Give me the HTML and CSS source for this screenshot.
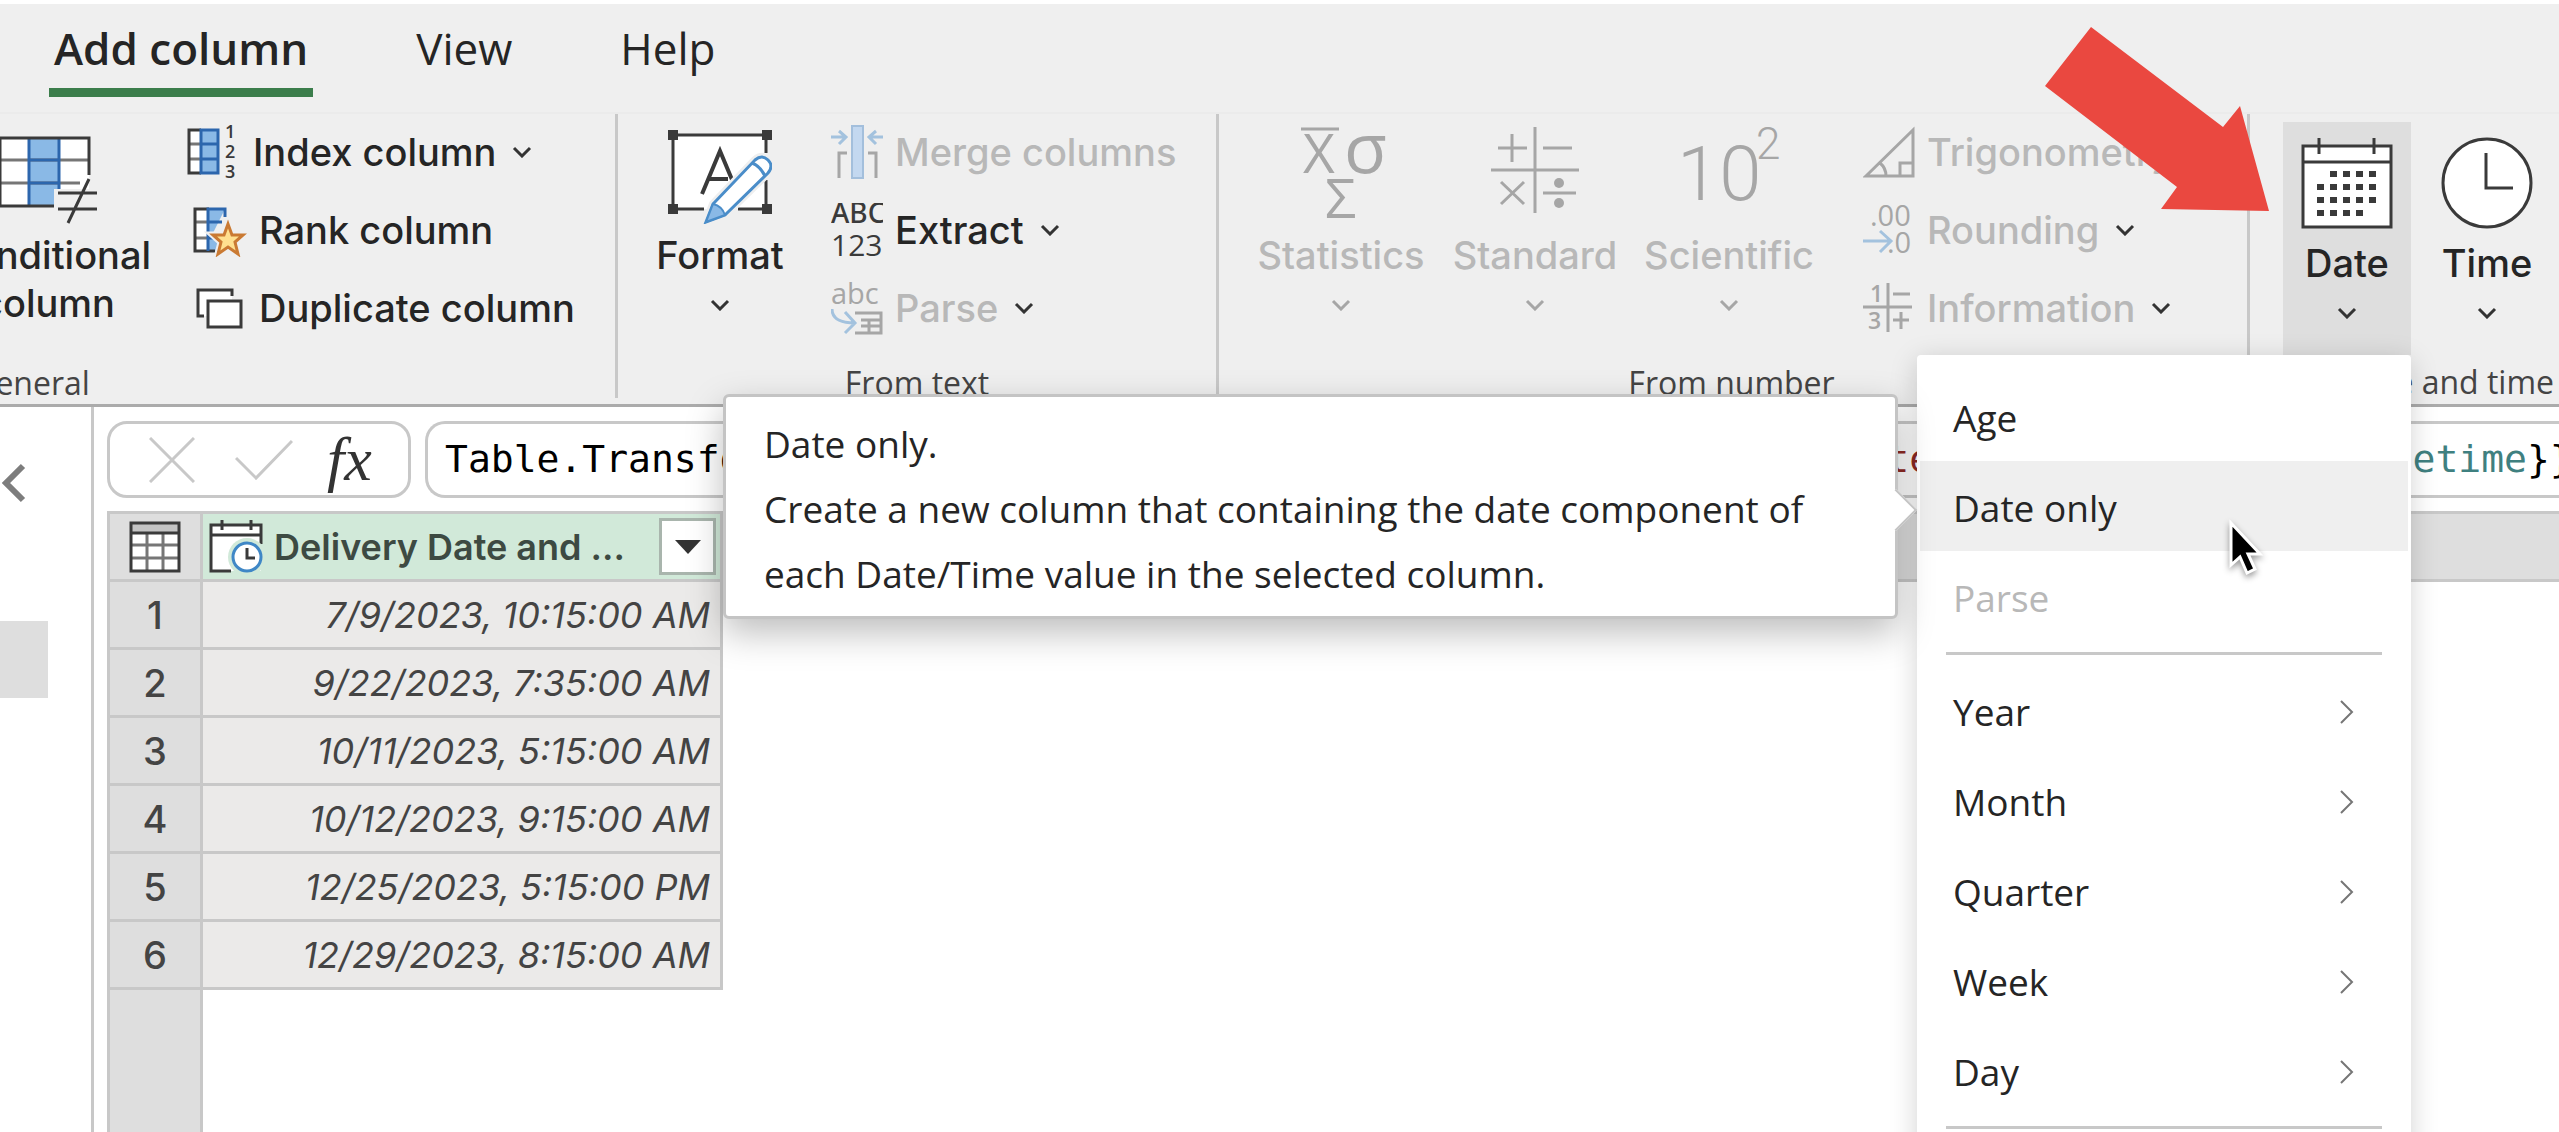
FILE: index.html
```html
<!DOCTYPE html>
<html lang="en">
<head>
  <meta charset="UTF-8" />
  <meta name="viewport" content="width=device-width, initial-scale=1.0"/>
  <title>Power Query - Add column</title>
  <link rel="stylesheet" href="styles.css">
</head>
<body>

  <!-- shared chevron shapes -->
  <svg class="defs" width="0" height="0" aria-hidden="true">
    <symbol id="chev-down" viewBox="0 0 20 12"><path d="M2 2 L10 10 L18 2" fill="none" stroke="currentColor" stroke-width="3"/></symbol>
    <symbol id="chev-right" viewBox="0 0 14 24"><path d="M1 1 L12 12 L1 23" fill="none" stroke="currentColor" stroke-width="2"/></symbol>
  </svg>

  <nav class="tabs">
    <a href="#add" class="tab active">Add column</a>
    <a href="#view" class="tab">View</a>
    <a href="#help" class="tab">Help</a>
  </nav>

  <div class="ribbon">
    <section class="group group-general">
      <div class="tools">
        <button type="button" class="big">
          <svg class="big-icon" width="104" height="98" viewBox="0 0 104 98">
            <path d="M4 12H93V81H4Z" fill="#fff"/>
            <path d="M33 12H63V81H33Z" fill="#8ab9e6"/>
            <path d="M4 34H93M4 57H84" stroke="#767676" stroke-width="3"/>
            <path d="M33 12V81M63 12V63M33 34H63M33 57H63" stroke="#2c66ad" stroke-width="3" fill="none"/>
            <path d="M93 49V12H4V80H58" stroke="#3a3a3a" stroke-width="3" fill="none"/>
            <path d="M58 63H104V98H58Z" fill="#efefef"/>
            <path d="M62 67H101M62 83H101M93 53L72 97" stroke="#3a3a3a" stroke-width="3" fill="none"/>
          </svg>
          <span>Conditional<br>column</span>
        </button>
        <div class="stack">
          <button type="button" class="small">
            <svg width="52" height="54" viewBox="0 0 52 54">
              <path d="M1 5H14V48H1Z" fill="#fff"/>
              <path d="M14 5H32V48H14Z" fill="#8ab9e6"/>
              <path d="M1 19H14M1 34H14" stroke="#767676" stroke-width="3"/>
              <path d="M14 5H2V48H14" stroke="#3a3a3a" stroke-width="3" fill="none"/>
              <path d="M14 5H31V48H14ZM14 19H31M14 34H31" stroke="#2c66ad" stroke-width="3" fill="none"/>
              <text x="38" y="13" class="icon-num">1</text>
              <text x="38" y="33" class="icon-num">2</text>
              <text x="38" y="53" class="icon-num">3</text>
            </svg>
            <span class="near">Index column</span>
            <svg class="chev" width="20" height="12"><use href="#chev-down"/></svg>
          </button>
          <button type="button" class="small">
            <svg width="60" height="54" viewBox="0 0 60 54">
              <path d="M8 6H21V48H8Z" fill="#fff"/>
              <path d="M21 6H38L26 30L34 48H21Z" fill="#8ab9e6"/>
              <path d="M8 19H21M8 35H21" stroke="#767676" stroke-width="3"/>
              <path d="M22 6H8V48H28" stroke="#3a3a3a" stroke-width="3" fill="none"/>
              <path d="M21 48V6H38V14M21 19H35M21 35H28" stroke="#2c66ad" stroke-width="3" fill="none"/>
              <path d="M41 21L45 32H56L48 39L51 51L41 44L31 51L34 39L26 32H37Z" fill="#ffe08f" stroke="#efefef" stroke-width="7"/>
              <path d="M41 21L45 32H56L48 39L51 51L41 44L31 51L34 39L26 32H37Z" fill="#ffe08f" stroke="#ca7a33" stroke-width="3"/>
            </svg>
            <span>Rank column</span>
          </button>
          <button type="button" class="small">
            <svg width="60" height="54" viewBox="0 0 60 54">
              <path d="M11 9H45V35H11Z" fill="#fff"/>
              <path d="M17 35H11V9H45V15" stroke="#3a3a3a" stroke-width="3" fill="none"/>
              <path d="M21 20H54V46H21Z" fill="#fff" stroke="#3a3a3a" stroke-width="3"/>
            </svg>
            <span>Duplicate column</span>
          </button>
        </div>
      </div>
      <div class="group-label">General</div>
    </section>

    <section class="group group-text">
      <div class="tools">
        <button type="button" class="big">
          <svg class="big-icon" width="104" height="98" viewBox="0 0 104 98">
            <path d="M5 9H98V83H5Z" fill="#fff"/>
            <path d="M98 27V9H5V83H36M70 83H98V54" stroke="#3a3a3a" stroke-width="3" fill="none"/>
            <path d="M0 4H10V14H0ZM94 4H104V14H94ZM0 78H10V88H0ZM94 78H104V88H94Z" fill="#3a3a3a"/>
            <path d="M34 68L52 25L65 56M40 53H60" stroke="#3a3a3a" stroke-width="4" fill="none"/>
            <path d="M38 96L45 78L87 34Q94 28 100 34Q106 40 100 47L57 89Z" fill="#fff" stroke="#efefef" stroke-width="8"/>
            <path d="M38 96L45 78L87 34Q94 28 100 34Q106 40 100 47L57 89Z" fill="#fff" stroke="#4a8dc9" stroke-width="3"/>
            <path d="M38 96L45 78Q54 80 57 89Z" fill="#8ab9e6" stroke="#4a8dc9" stroke-width="2"/>
            <path d="M84 37Q92 40 97 50" stroke="#4a8dc9" stroke-width="3" fill="none"/>
          </svg>
          <span>Format</span>
          <svg class="chev" width="20" height="12"><use href="#chev-down"/></svg>
        </button>
        <div class="stack">
          <button type="button" class="small" disabled>
            <svg width="52" height="54" viewBox="0 0 52 54">
              <path d="M21 1H32V53H21Z" fill="#c3d8f0" stroke="#a3bfdc" stroke-width="2"/>
              <path d="M0 12H14M8 6L15 12L8 19M52 12H38M45 6L38 12L45 19" stroke="#a3c2de" stroke-width="3" fill="none"/>
              <path d="M8 53V28H16M45 53V28H37" stroke="#a6a6a6" stroke-width="3" fill="none"/>
            </svg>
            <span>Merge columns</span>
          </button>
          <button type="button" class="small">
            <svg width="52" height="54" viewBox="0 0 52 54">
              <text x="0" y="20" class="icon-abc">ABC</text>
              <text x="0" y="53" class="icon-123">123</text>
            </svg>
            <span>Extract</span>
            <svg class="chev" width="20" height="12"><use href="#chev-down"/></svg>
          </button>
          <button type="button" class="small" disabled>
            <svg width="52" height="54" viewBox="0 0 52 54">
              <text x="0" y="23" class="icon-lower">abc</text>
              <path d="M1 28Q1 42 24 42M14 31L24 42L14 52" stroke="#a3c2de" stroke-width="3" fill="none"/>
              <path d="M24 32H50V52H24M30 39H50M30 45H50M38 39V52" stroke="#a6a6a6" stroke-width="3" fill="none"/>
            </svg>
            <span>Parse</span>
            <svg class="chev dark" width="20" height="12"><use href="#chev-down"/></svg>
          </button>
        </div>
      </div>
      <div class="group-label">From text</div>
    </section>

    <section class="group group-number">
      <div class="tools">
        <button type="button" class="big" disabled>
          <svg class="big-icon" width="104" height="98" viewBox="0 0 104 98">
            <path d="M12 3H50" stroke="#a6a6a6" stroke-width="3"/>
            <text x="14" y="47" class="icon-math">X</text>
            <text x="55" y="47" class="icon-sigma">σ</text>
            <text x="36" y="92" class="icon-math">Σ</text>
          </svg>
          <span>Statistics</span>
          <svg class="chev" width="20" height="12"><use href="#chev-down"/></svg>
        </button>
        <button type="button" class="big" disabled>
          <svg class="big-icon" width="104" height="98" viewBox="0 0 104 98">
            <path d="M8 44H96M52 1V87M15 22H44M29 8V36M60 22H89M60 67H93M18 56L41 78M41 56L18 78" stroke="#a6a6a6" stroke-width="3" fill="none"/>
            <circle cx="76" cy="57" r="5" fill="#a6a6a6"/>
            <circle cx="76" cy="77" r="5" fill="#a6a6a6"/>
          </svg>
          <span>Standard</span>
          <svg class="chev" width="20" height="12"><use href="#chev-down"/></svg>
        </button>
        <button type="button" class="big" disabled>
          <svg class="big-icon" width="104" height="98" viewBox="0 0 104 98">
            <text x="0" y="74" class="icon-ten">10</text>
            <text x="79" y="33" class="icon-sup">2</text>
          </svg>
          <span>Scientific</span>
          <svg class="chev" width="20" height="12"><use href="#chev-down"/></svg>
        </button>
        <div class="stack">
          <button type="button" class="small" disabled>
            <svg width="52" height="54" viewBox="0 0 52 54">
              <path d="M3 51L50 5V51ZM17 38Q23 43 23 51M37 51V38H50" stroke="#a6a6a6" stroke-width="3" fill="none"/>
            </svg>
            <span>Trigonometry</span>
            <svg class="chev dark" width="20" height="12"><use href="#chev-down"/></svg>
          </button>
          <button type="button" class="small" disabled>
            <svg width="52" height="54" viewBox="0 0 52 54">
              <text x="7" y="23" class="icon-dec">.00</text>
              <text x="24" y="50" class="icon-dec">.0</text>
              <path d="M0 38H27M17 28L28 38L17 49" stroke="#a3c2de" stroke-width="3" fill="none"/>
            </svg>
            <span>Rounding</span>
            <svg class="chev dark" width="20" height="12"><use href="#chev-down"/></svg>
          </button>
          <button type="button" class="small" disabled>
            <svg width="52" height="54" viewBox="0 0 52 54">
              <path d="M0 26H49M25 2V51M30 13H47M30 39H46M38 31V48" stroke="#a6a6a6" stroke-width="3" fill="none"/>
              <text x="7" y="21" class="icon-info">1</text>
              <text x="5" y="48" class="icon-info">3</text>
            </svg>
            <span>Information</span>
            <svg class="chev dark" width="20" height="12"><use href="#chev-down"/></svg>
          </button>
        </div>
      </div>
      <div class="group-label">From number</div>
    </section>

    <section class="group group-date">
      <div class="tools">
        <div class="dropdown">
          <button type="button" class="big open" aria-expanded="true">
            <svg class="big-icon" width="92" height="92" viewBox="0 0 92 92">
              <path d="M2 9H90V90H2Z" fill="#fff" stroke="#3a3a3a" stroke-width="3"/>
              <path d="M2 25H90M18 1V17M73 1V17" stroke="#3a3a3a" stroke-width="3"/>
              <path d="M29 37H75" stroke="#3a3a3a" stroke-width="6" stroke-dasharray="7 6"/>
              <path d="M16 50H75M16 63H75M16 76H62" stroke="#3a3a3a" stroke-width="6" stroke-dasharray="7 6"/>
            </svg>
            <span>Date</span>
            <svg class="chev" width="20" height="12"><use href="#chev-down"/></svg>
          </button>

          <svg class="pointer-arrow" width="224" height="184" viewBox="0 0 224 184" aria-hidden="true">
            <path d="M46 0L178 100L195 79L224 184L116 182L132 160L0 59Z" fill="#ea4840"/>
          </svg>

          <div class="menu" role="menu">
            <button type="button" role="menuitem">Age</button>
            <div class="item-wrap">
              <button type="button" role="menuitem" class="hovered" aria-describedby="date-tip">Date only</button>
              <div class="tooltip" id="date-tip" role="tooltip">
                <p>Date only.</p>
                <p>Create a new column that containing the date component of each Date/Time value in the selected column.</p>
              </div>
              <svg class="cursor" width="40" height="62" viewBox="0 0 40 62" aria-hidden="true">
                <path d="M4 4V46L13 38L20 54L28 50L21 35H33Z" fill="#000" stroke="#fff" stroke-width="3"/>
              </svg>
            </div>
            <button type="button" role="menuitem" disabled>Parse</button>
            <hr>
            <button type="button" role="menuitem">Year <svg width="14" height="24"><use href="#chev-right"/></svg></button>
            <button type="button" role="menuitem">Month <svg width="14" height="24"><use href="#chev-right"/></svg></button>
            <button type="button" role="menuitem">Quarter <svg width="14" height="24"><use href="#chev-right"/></svg></button>
            <button type="button" role="menuitem">Week <svg width="14" height="24"><use href="#chev-right"/></svg></button>
            <button type="button" role="menuitem">Day <svg width="14" height="24"><use href="#chev-right"/></svg></button>
            <hr>
          </div>
        </div>

        <button type="button" class="big">
          <svg class="big-icon" width="92" height="92" viewBox="0 0 92 92">
            <circle cx="46" cy="46" r="44" fill="#fff" stroke="#3a3a3a" stroke-width="3"/>
            <path d="M45 16V51H72" stroke="#3a3a3a" stroke-width="3" fill="none"/>
          </svg>
          <span>Time</span>
          <svg class="chev" width="20" height="12"><use href="#chev-down"/></svg>
        </button>
      </div>
      <div class="group-label">Date and time</div>
    </section>
  </div>

  <div class="workspace">
    <aside class="queries">
      <button type="button" class="collapse" aria-label="Collapse queries pane">
        <svg width="26" height="40" viewBox="0 0 26 40"><path d="M23 3L6 20L23 37" fill="none" stroke="#7d7d7d" stroke-width="6"/></svg>
      </button>
      <div class="selected-query"></div>
    </aside>

    <main class="editor">
      <div class="formula-bar">
        <div class="formula-actions">
          <button type="button" aria-label="Cancel"><svg width="46" height="46" viewBox="0 0 46 46"><path d="M1 1L45 45M45 1L1 45" stroke="#c8c8c8" stroke-width="3"/></svg></button>
          <button type="button" aria-label="Apply"><svg width="58" height="42" viewBox="0 0 58 42"><path d="M1 19L21 39L57 2" fill="none" stroke="#c8c8c8" stroke-width="3"/></svg></button>
          <span class="fx">fx</span>
        </div>
        <div class="formula" role="textbox" aria-label="Formula" contenteditable="true" spellcheck="false">Table.TransformColumnTypes(#"Renamed columns 1", {{<span class="str">"Delivery Date and Hours"</span>, <span class="kw">type</span> <span class="type">datetime</span>}})</div>
      </div>

      <div class="grid-area">
        <div class="grid">
          <table>
            <thead>
              <tr>
                <th class="num">
                  <svg width="52" height="52" viewBox="0 0 52 52">
                    <path d="M2 2H50V50H2Z" fill="#fff"/>
                    <path d="M2 2H50V12H2Z" fill="#c4c4c4"/>
                    <path d="M2 24H50M2 37H50M18 12V50M34 12V50" stroke="#767676" stroke-width="3"/>
                    <path d="M2 2H50V50H2ZM2 12H50" fill="none" stroke="#3a3a3a" stroke-width="3"/>
                  </svg>
                </th>
                <th>
                  <div class="col-head">
                    <svg width="54" height="54" viewBox="0 0 54 54">
                      <path d="M2 5H52V51H2Z" fill="#fff"/>
                      <path d="M52 24V5H2V51H22M2 15H52M13 0V10M42 0V10" fill="none" stroke="#3a3a3a" stroke-width="3"/>
                      <circle cx="38" cy="37" r="19" fill="#d1e9d9"/>
                      <circle cx="38" cy="37" r="14" fill="#fff" stroke="#3f87c6" stroke-width="3"/>
                      <path d="M38 28V38H46" fill="none" stroke="#3a3a3a" stroke-width="3"/>
                    </svg>
                    <span class="col-name">Delivery Date and ...</span>
                    <button type="button" class="filter" aria-label="Filter"><svg width="26" height="14" viewBox="0 0 26 14"><path d="M0 0H26L13 14Z" fill="#333"/></svg></button>
                  </div>
                </th>
              </tr>
            </thead>
            <tbody>
              <tr><td class="num">1</td><td>7/9/2023, 10:15:00 AM</td></tr>
              <tr><td class="num">2</td><td>9/22/2023, 7:35:00 AM</td></tr>
              <tr><td class="num">3</td><td>10/11/2023, 5:15:00 AM</td></tr>
              <tr><td class="num">4</td><td>10/12/2023, 9:15:00 AM</td></tr>
              <tr><td class="num">5</td><td>12/25/2023, 5:15:00 PM</td></tr>
              <tr><td class="num">6</td><td>12/29/2023, 8:15:00 AM</td></tr>
            </tbody>
          </table>
          <div class="rail"></div>
        </div>
        <div class="head-fill"></div>
      </div>
    </main>
  </div>

</body>
</html>
```

FILE: styles.css
```css
* {
  box-sizing: border-box;
}

body {
  margin: 0;
  height: 100vh;
  overflow: hidden;
  display: flex;
  flex-direction: column;
  background: #fff;
  color: #252525;
  font-family: 'Open Sans', sans-serif;
  font-size: 38px;
}

button {
  border: none;
  background: none;
  padding: 0;
  color: inherit;
  font: inherit;
}

svg {
  flex: none;
}

.defs {
  position: absolute;
}

/* tabs */
.tabs {
  display: flex;
  flex: none;
  gap: 98px;
  height: 110px;
  margin-top: 4px;
  padding-left: 49px;
  background: #efefef;
  border-bottom: 2px solid #ebebeb;
}

.tab {
  height: 93px;
  padding: 0 5px;
  color: #252525;
  font-size: 44px;
  line-height: 88px;
  text-decoration: none;
}

.tab.active {
  font-weight: 600;
  border-bottom: 9px solid #3b7d4b;
}

/* ribbon */
.ribbon {
  position: relative;
  z-index: 2;
  display: flex;
  flex: none;
  height: 293px;
  background: #efefef;
  border-bottom: 3px solid #ababab;
}

.group {
  position: relative;
  display: flex;
  flex: none;
  flex-direction: column;
  height: 284px;
  padding-left: 28px;
  border-right: 3px solid #c8c8c8;
}

.group-general {
  width: 1171px;
  margin-left: -553px;
}

.group-general .tools {
  justify-content: flex-end;
  padding-right: 40px;
}

.group-text {
  width: 601px;
}

.group-number {
  width: 1031px;
  padding-left: 25px;
}

.group-date {
  width: 392px;
  padding-left: 33px;
  border-right: none;
}

.tools {
  display: flex;
  flex: 1;
  padding-top: 8px;
  font-family: 'Inter', sans-serif;
  font-weight: 450;
}

.group-label {
  height: 52px;
  margin-left: -28px;
  color: #444;
  font-size: 32px;
  line-height: 54px;
  text-align: center;
  white-space: nowrap;
}

.big {
  display: flex;
  flex: none;
  flex-direction: column;
  align-items: center;
  width: 194px;
  padding-top: 4px;
  line-height: 48px;
}

.big-icon {
  margin-bottom: 7px;
}

.big .chev {
  margin-top: 20px;
}

.group-general .big {
  width: 204px;
}

.group-text .big {
  width: 148px;
}

.group-date .tools {
  gap: 12px;
}

.group-date .big {
  width: 128px;
  height: 233px;
  padding-top: 15px;
}

.group-date .big-icon {
  margin-bottom: 10px;
}

.big.open {
  background: #dedede;
}

.stack {
  display: flex;
  flex-direction: column;
  margin-left: 37px;
}

.group-general .stack {
  width: 388px;
}

.small {
  display: flex;
  align-items: center;
  gap: 12px;
  height: 78px;
  padding-bottom: 18px;
  white-space: nowrap;
}

.small .chev {
  margin-left: 4px;
}

.near {
  margin-left: 2px;
}

button:disabled {
  color: #b8b8b8;
}

.chev,
.chev.dark {
  color: #333;
}

.big:disabled .chev {
  color: #a6a6a6;
}

.icon-num {
  font: 600 18px 'Open Sans', sans-serif;
  fill: #3a3a3a;
}

.icon-abc {
  font: 500 28px 'Noto Sans', sans-serif;
  fill: #3a3a3a;
}

.icon-123 {
  font: 30px 'Open Sans', sans-serif;
  fill: #3a3a3a;
}

.icon-lower,
.icon-dec {
  font: 29px 'Open Sans', sans-serif;
  fill: #a6a6a6;
}

.icon-info {
  font: 600 23px 'Open Sans', sans-serif;
  fill: #a6a6a6;
}

.icon-math,
.icon-sigma {
  font: 55px 'Open Sans', sans-serif;
  fill: #a6a6a6;
}

.icon-sigma {
  font-size: 70px;
}

.icon-ten {
  font: 300 76px 'Roboto', sans-serif;
  fill: #a6a6a6;
}

.icon-sup {
  font: 300 44px 'Roboto', sans-serif;
  fill: #a6a6a6;
}

/* date drop-down */
.dropdown {
  position: relative;
}

.pointer-arrow {
  position: absolute;
  top: -95px;
  right: 142px;
}

.menu {
  position: absolute;
  top: 233px;
  right: 0;
  width: 494px;
  padding: 16px 3px;
  background: #fff;
  border-radius: 4px;
  box-shadow: 0 6px 28px rgba(0, 0, 0, 0.18);
  font-family: 'Open Sans', sans-serif;
  font-size: 37px;
  font-weight: 400;
}

.menu button {
  display: flex;
  align-items: center;
  justify-content: space-between;
  width: 100%;
  height: 90px;
  padding: 3px 54px 0 33px;
}

.menu button svg {
  color: #767676;
}

.menu .hovered {
  background: #efefef;
}

.menu hr {
  height: 3px;
  margin: 11px 26px 10px;
  border: none;
  background: #c8c8c8;
}

.item-wrap {
  position: relative;
}

.cursor {
  position: absolute;
  top: 58px;
  left: 307px;
  filter: drop-shadow(0 3px 3px rgba(0, 0, 0, 0.4));
}

.tooltip {
  position: absolute;
  top: -67px;
  right: calc(100% + 22px);
  width: 1175px;
  padding: 14px 40px 10px 38px;
  background: #fff;
  border: 3px solid #c4c4c4;
  border-radius: 6px;
  box-shadow: 0 14px 36px rgba(0, 0, 0, 0.26);
  line-height: 65px;
}

.tooltip::after {
  content: "";
  position: absolute;
  top: 98px;
  right: -16px;
  width: 28px;
  height: 28px;
  background: #fff;
  border-top: 2px solid #c4c4c4;
  border-right: 2px solid #c4c4c4;
  transform: rotate(45deg);
}

.tooltip p {
  margin: 0;
}

/* workspace */
.workspace {
  display: flex;
  flex: 1;
  min-height: 0;
}

.queries {
  width: 91px;
  flex: none;
}

.collapse {
  display: block;
  height: 40px;
  margin-top: 55px;
}

.selected-query {
  width: 48px;
  height: 77px;
  margin-top: 119px;
  background: #dedede;
}

.editor {
  display: flex;
  flex: 1;
  flex-direction: column;
  min-width: 0;
  padding: 14px 0 0 13px;
  border-left: 3px solid #c8c8c8;
}

.formula-bar {
  display: flex;
  gap: 14px;
  height: 77px;
}

.formula-actions {
  display: flex;
  flex: none;
  align-items: center;
  gap: 40px;
  width: 304px;
  padding-left: 39px;
  border: 3px solid #c8c8c8;
  border-radius: 20px;
}

.formula-actions button {
  display: flex;
}

.fx {
  margin-left: -6px;
  color: #333;
  font: italic 62px 'Liberation Serif', serif;
}

.formula {
  flex: 1;
  min-width: 0;
  padding-left: 17px;
  overflow: hidden;
  border: 3px solid #c8c8c8;
  border-right: none;
  border-radius: 20px 0 0 20px;
  color: #000;
  font: 38px/70px 'DejaVu Sans Mono', monospace;
  white-space: nowrap;
}

.str {
  color: #8f2a24;
}

.kw {
  color: #1a3fd0;
}

.type {
  color: #3f8080;
}

/* data grid */
.grid-area {
  display: flex;
  flex: 1;
  min-height: 0;
  margin-top: 13px;
}

.grid {
  display: flex;
  flex: none;
  flex-direction: column;
}

table {
  width: 616px;
  table-layout: fixed;
  border-collapse: separate;
  border-spacing: 0;
  font-family: 'Inter', sans-serif;
}

th,
td {
  height: 68px;
  padding: 0;
  border-right: 3px solid #c8c8c8;
  border-bottom: 3px solid #c8c8c8;
}

th {
  height: 71px;
  background: #d1e9d9;
  border-top: 3px solid #c8c8c8;
}

td {
  padding-right: 10px;
  background: #ebeae9;
  color: #444;
  font-size: 36px;
  font-style: italic;
  font-weight: 450;
  text-align: right;
}

.num {
  width: 96px;
  padding: 0;
  background: #dedede;
  border-left: 3px solid #c8c8c8;
  font-size: 38px;
  font-style: normal;
  text-align: center;
}

th svg {
  display: block;
  margin: 0 auto;
}

.col-head {
  display: flex;
  align-items: center;
  gap: 11px;
  padding: 0 4px 0 6px;
}

.col-head > svg {
  margin: 0;
}

.col-name {
  flex: 1;
  color: #3d4a42;
  font-size: 36px;
  font-weight: 600;
  text-align: left;
  white-space: nowrap;
}

.filter {
  display: flex;
  flex: none;
  align-items: center;
  justify-content: center;
  width: 57px;
  height: 57px;
  background: #fff;
  border: 3px solid #a9b5ad;
}

.rail {
  flex: 1;
  width: 96px;
  background: #dedede;
  border: solid #c8c8c8;
  border-width: 0 3px;
}

.head-fill {
  flex: 1;
  height: 71px;
  background: #dedede;
  border: solid #c8c8c8;
  border-width: 3px 0;
}
```
